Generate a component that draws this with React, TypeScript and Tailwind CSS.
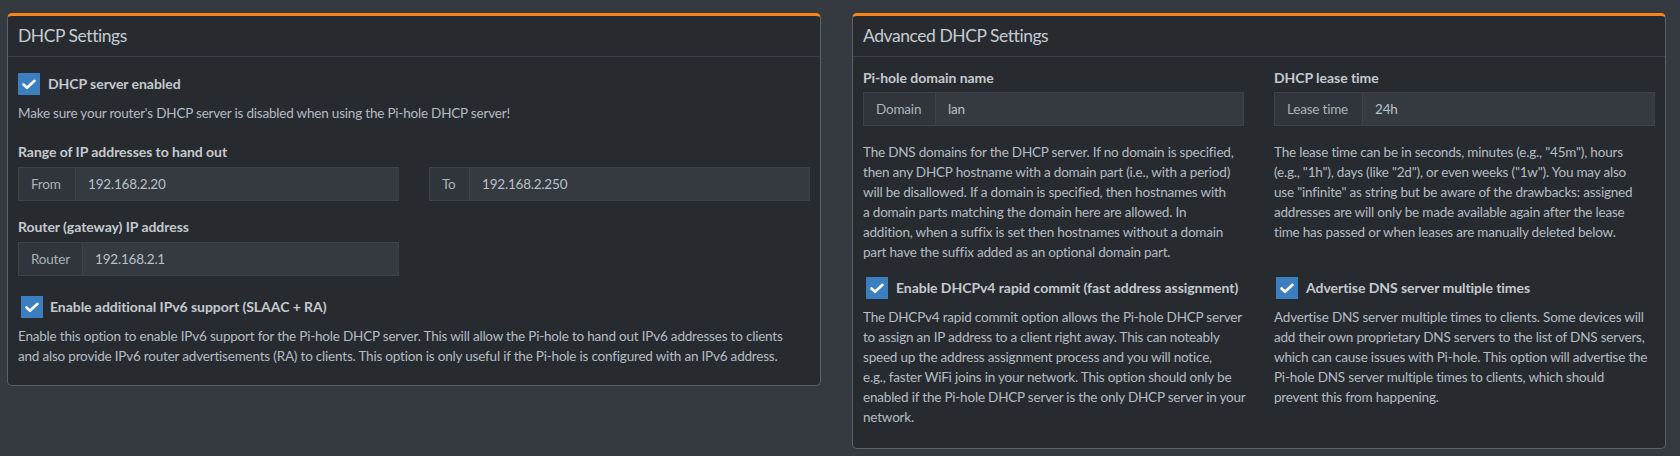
import React from "react";

const Check = ({ className = "" }: { className?: string }) => (
  <span className={"flex h-[22px] w-[22px] shrink-0 items-center justify-center bg-[#3b7fc0] " + className}>
    <svg width="22" height="22" viewBox="0 0 22 22" fill="none">
      <polyline points="5.5,11.5 9,14.8 16.5,7.8" stroke="#ffffff" strokeWidth="2.6" strokeLinecap="round" strokeLinejoin="round" />
    </svg>
  </span>
);

const InputGroup = ({ addon, value, addonW }: { addon: string; value: string; addonW: string }) => (
  <div className="flex h-[34px] w-full border border-[#3d4349] bg-[#353a41]">
    <div className={"flex items-center border-r border-[#3d4349] bg-[#30353b] pl-[12px] text-[#aab1b8] " + addonW}>{addon}</div>
    <div className="flex flex-1 items-center pl-[12px] text-[#b9c0c7]">{value}</div>
  </div>
);

const Lines = ({ lines }: { lines: string[] }) => (
  <p className="text-[#b5bcc3]">
    {lines.map((l, i) => (
      <span key={i} className="block whitespace-nowrap">
        {l}
      </span>
    ))}
  </p>
);

const Label = ({ children, className = "" }: { children: React.ReactNode; className?: string }) => (
  <div className={"text-[14px] font-bold tracking-[-0.05px] text-[#c4c9ce] " + className}>{children}</div>
);

const Panel = ({ title, children, width }: { title: string; children: React.ReactNode; width: string }) => (
  <div className={"rounded-[5px] border border-[#5c6166] border-t-[3px] border-t-[#f7841c] bg-[#272b30] " + width}>
    <div className="flex h-[41px] items-center border-b border-[#3a3f45] px-[10px]">
      <h3 className="text-[17.5px] leading-none tracking-[-0.45px] text-[#c6cbd0]">{title}</h3>
    </div>
    {children}
  </div>
);

export default function App() {
  return (
    <div
      className="min-h-[456px] w-[1680px] bg-[#353a40] pt-[13px] text-[13.5px] leading-[20px] tracking-[-0.2px]"
      style={{ fontFamily: "Lato, 'Noto Sans', sans-serif" }}
    >
      <div className="flex items-start gap-[31px] pl-[7px]">
        <Panel title="DHCP Settings" width="w-[814px]">
          <div className="px-[10px] pb-[19px]">
            <div className="mt-[16px] flex items-center">
              <Check />
              <Label className="ml-[8px]">DHCP server enabled</Label>
            </div>
            <p className="mt-[8px] text-[#b5bcc3]">
              Make sure your router's DHCP server is disabled when using the Pi-hole DHCP server!
            </p>
            <Label className="mt-[19px]">Range of IP addresses to hand out</Label>
            <div className="mt-[5px] grid grid-cols-2 gap-x-[30px]">
              <InputGroup addon="From" value="192.168.2.20" addonW="w-[57px]" />
              <InputGroup addon="To" value="192.168.2.250" addonW="w-[40px]" />
            </div>
            <Label className="mt-[16px]">Router (gateway) IP address</Label>
            <div className="mt-[5px] grid grid-cols-2 gap-x-[30px]">
              <InputGroup addon="Router" value="192.168.2.1" addonW="w-[64px]" />
            </div>
            <div className="mt-[20px] flex items-center pl-[3px]">
              <Check />
              <Label className="ml-[7px]">Enable additional IPv6 support (SLAAC + RA)</Label>
            </div>
            <div className="mt-[8px]">
              <Lines
                lines={[
                  "Enable this option to enable IPv6 support for the Pi-hole DHCP server. This will allow the Pi-hole to hand out IPv6 addresses to clients",
                  "and also provide IPv6 router advertisements (RA) to clients. This option is only useful if the Pi-hole is configured with an IPv6 address.",
                ]}
              />
            </div>
          </div>
        </Panel>

        <Panel title="Advanced DHCP Settings" width="w-[814px]">
          <div className="px-[10px] pb-[21px]">
            <div className="mt-[11px] grid grid-cols-2 gap-x-[30px]">
              <div>
                <Label>Pi-hole domain name</Label>
                <div className="mt-[4px]">
                  <InputGroup addon="Domain" value="lan" addonW="w-[72px]" />
                </div>
                <div className="mt-[16px]">
                  <Lines
                    lines={[
                      "The DNS domains for the DHCP server. If no domain is specified,",
                      "then any DHCP hostname with a domain part (i.e., with a period)",
                      "will be disallowed. If a domain is specified, then hostnames with",
                      "a domain parts matching the domain here are allowed. In",
                      "addition, when a suffix is set then hostnames without a domain",
                      "part have the suffix added as an optional domain part.",
                    ]}
                  />
                </div>
              </div>
              <div>
                <Label>DHCP lease time</Label>
                <div className="mt-[4px]">
                  <InputGroup addon="Lease time" value="24h" addonW="w-[88px]" />
                </div>
                <div className="mt-[16px]">
                  <Lines
                    lines={[
                      "The lease time can be in seconds, minutes (e.g., \"45m\"), hours",
                      "(e.g., \"1h\"), days (like \"2d\"), or even weeks (\"1w\"). You may also",
                      "use \"infinite\" as string but be aware of the drawbacks: assigned",
                      "addresses are will only be made available again after the lease",
                      "time has passed or when leases are manually deleted below.",
                    ]}
                  />
                </div>
              </div>
            </div>
            <div className="mt-[15px] grid grid-cols-2 gap-x-[30px]">
              <div>
                <div className="flex items-center pl-[3px]">
                  <Check />
                  <Label className="ml-[8px]">Enable DHCPv4 rapid commit (fast address assignment)</Label>
                </div>
                <div className="mt-[8px]">
                  <Lines
                    lines={[
                      "The DHCPv4 rapid commit option allows the Pi-hole DHCP server",
                      "to assign an IP address to a client right away. This can noteably",
                      "speed up the address assignment process and you will notice,",
                      "e.g., faster WiFi joins in your network. This option should only be",
                      "enabled if the Pi-hole DHCP server is the only DHCP server in your",
                      "network.",
                    ]}
                  />
                </div>
              </div>
              <div>
                <div className="flex items-center pl-[2px]">
                  <Check />
                  <Label className="ml-[8px]">Advertise DNS server multiple times</Label>
                </div>
                <div className="mt-[8px]">
                  <Lines
                    lines={[
                      "Advertise DNS server multiple times to clients. Some devices will",
                      "add their own proprietary DNS servers to the list of DNS servers,",
                      "which can cause issues with Pi-hole. This option will advertise the",
                      "Pi-hole DNS server multiple times to clients, which should",
                      "prevent this from happening.",
                    ]}
                  />
                </div>
              </div>
            </div>
          </div>
        </Panel>
      </div>
    </div>
  );
}
